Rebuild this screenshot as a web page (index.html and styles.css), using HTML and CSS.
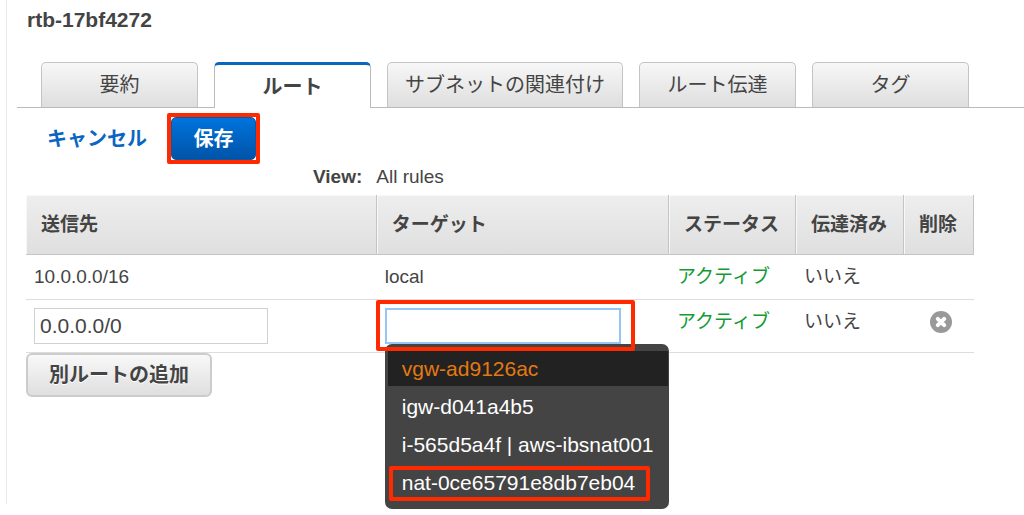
FILE: index.html
```html
<!DOCTYPE html>
<html lang="ja">
<head>
<meta charset="utf-8">
<meta name="viewport" content="width=device-width, initial-scale=1">
<title>rtb-17bf4272</title>
<link rel="stylesheet" href="styles.css">
</head>
<body>
<main class="pane">
  <h1 class="title">rtb-17bf4272</h1>
  <div class="tabs" role="tablist">
    <button class="tab" type="button" role="tab">要約</button>
    <button class="tab tab-active" type="button" role="tab" aria-selected="true">ルート</button>
    <button class="tab" type="button" role="tab">サブネットの関連付け</button>
    <button class="tab" type="button" role="tab">ルート伝達</button>
    <button class="tab" type="button" role="tab">タグ</button>
  </div>
  <div class="content">
    <div class="actions">
      <a class="cancel" href="#">キャンセル</a>
      <div class="save-mark"><button class="save" type="button">保存</button></div>
    </div>
    <div class="view"><strong>View:</strong><span>All rules</span></div>
    <table class="routes">
      <colgroup>
        <col class="col-dest"><col class="col-target"><col class="col-status"><col class="col-prop"><col class="col-del">
      </colgroup>
      <thead>
        <tr><th scope="col">送信先</th><th scope="col">ターゲット</th><th scope="col">ステータス</th><th scope="col">伝達済み</th><th scope="col">削除</th></tr>
      </thead>
      <tbody>
        <tr><td>10.0.0.0/16</td><td>local</td><td class="active">アクティブ</td><td>いいえ</td><td></td></tr>
        <tr class="edit-row">
          <td class="field-cell"><input class="field" type="text" value="0.0.0.0/0" aria-label="送信先"></td>
          <td class="field-cell">
            <div class="combo">
              <input class="field field-focus" type="text" aria-label="ターゲット">
              <ul class="menu">
                <li><button class="option option-current" type="button">vgw-ad9126ac</button></li>
                <li><button class="option" type="button">igw-d041a4b5</button></li>
                <li><button class="option" type="button">i-565d5a4f | aws-ibsnat001</button></li>
                <li><button class="option option-marked" type="button">nat-0ce65791e8db7eb04</button></li>
              </ul>
            </div>
          </td>
          <td class="active">アクティブ</td>
          <td>いいえ</td>
          <td class="delete-cell">
            <button class="delete" type="button" aria-label="削除">
              <svg width="22" height="22" viewBox="0 0 22 22" aria-hidden="true">
                <circle cx="11" cy="11" r="11" fill="#999"/>
                <path d="M7.8 7.8l6.4 6.4M14.2 7.8l-6.4 6.4" stroke="#fff" stroke-width="4" stroke-linecap="round"/>
              </svg>
            </button>
          </td>
        </tr>
      </tbody>
    </table>
    <button class="add" type="button">別ルートの追加</button>
  </div>
</main>
</body>
</html>
```
FILE: styles.css
```css
* {
  box-sizing: border-box;
}

body {
  display: flex;
  flex-direction: column;
  min-height: 100vh;
  margin: 0;
  padding-bottom: 11px;
  background: #fff;
  color: #444;
  font-family: "Liberation Sans", "Noto Sans CJK JP", sans-serif;
  font-size: 19px;
  line-height: 28px;
}

button,
input {
  margin: 0;
  color: inherit;
  font: inherit;
}

button {
  cursor: pointer;
}

.pane {
  flex: 1;
  margin-left: 6px;
  padding-top: 6px;
  border-left: 1px solid #eaeaea;
}

.title {
  margin: 0 0 28px 20px;
  font-size: 21px;
  line-height: 28px;
}

.tabs {
  display: flex;
  gap: 16px;
  margin-left: 10px;
  padding-left: 24px;
  border-bottom: 1px solid #bbb;
}

.tab {
  min-width: 157px;
  height: 45px;
  padding: 0 17px;
  border: 1px solid #c4c4c4;
  border-bottom: 0;
  border-radius: 5px 5px 0 0;
  background: linear-gradient(#f7f7f7, #dedede);
  font-size: 20px;
  white-space: nowrap;
}

.tab-active {
  height: 46px;
  margin-bottom: -1px;
  border-color: #bbb;
  border-top: 3px solid #0a67c1;
  background: #fff;
  font-weight: bold;
}

.content {
  padding: 5px 50px 0 19px;
}

.actions {
  display: flex;
  align-items: center;
  gap: 20px;
  padding-left: 21px;
}

.cancel {
  color: #0a66c2;
  font-size: 20px;
  font-weight: bold;
  text-decoration: none;
}

.save-mark {
  border: 4px solid #ff2a00;
  border-radius: 2px;
}

.save {
  display: block;
  width: 85px;
  height: 43px;
  padding: 0;
  border: 1px solid #0a58a8;
  border-radius: 5px;
  background: linear-gradient(#0073dd, #0054a8);
  color: #fff;
  font-size: 20px;
  font-weight: bold;
}

.view {
  display: flex;
  gap: 14px;
  padding: 0 0 5px 287px;
  line-height: 26px;
}

.routes {
  width: 100%;
  border-collapse: separate;
  border-spacing: 0;
  table-layout: fixed;
}

.col-dest {
  width: 37%;
}

.col-status {
  width: 127px;
}

.col-prop {
  width: 108px;
}

.col-del {
  width: 70px;
}

.routes th {
  height: 60px;
  padding: 0 0 0 15px;
  border-right: 1px solid #c4c4c4;
  border-bottom: 1px solid #c4c4c4;
  background: linear-gradient(#eee, #dfdfdf);
  box-shadow: inset 1px 1px #f8f8f8;
  text-align: left;
  white-space: nowrap;
}

.routes td {
  height: 45px;
  padding: 8px 0 8px 8px;
  border-bottom: 1px solid #ddd;
  vertical-align: top;
  white-space: nowrap;
}

.edit-row td {
  height: 53px;
}

.routes .active {
  color: #129a33;
}

.routes .field-cell {
  padding-bottom: 7px;
}

.field {
  display: block;
  width: 234px;
  height: 36px;
  padding: 0 5px;
  border: 1px solid #d0d0d0;
  background: #fff;
  font-size: 21px;
}

.field-focus {
  width: 236px;
  border: 2px solid #96c6f8;
  outline: none;
}

.combo {
  position: relative;
  width: 236px;
}

.combo::after {
  position: absolute;
  z-index: 2;
  inset: -8px -14px -7px -9px;
  border: 4px solid #ff2a00;
  border-radius: 2px;
  content: "";
  pointer-events: none;
}

.menu {
  position: absolute;
  z-index: 1;
  top: 100%;
  left: 0;
  display: grid;
  gap: 3px;
  width: 284px;
  margin: 0;
  padding: 7px 3px 9px;
  border-radius: 7px;
  background: #444;
  list-style: none;
}

.option {
  position: relative;
  display: block;
  width: 100%;
  height: 35px;
  padding: 0 14px;
  border: 0;
  background: transparent;
  color: #fff;
  font-size: 21px;
  text-align: left;
}

.option-current {
  background: #222;
  color: #e47911;
}

.option-marked::after {
  position: absolute;
  inset: 1px 18px -1px 1px;
  border: 4px solid #ff2a00;
  border-radius: 2px;
  content: "";
}

.routes .delete-cell {
  padding: 11px 0 0 26px;
}

.delete {
  display: block;
  padding: 0;
  border: 0;
  background: transparent;
}

.delete svg {
  display: block;
}

.add {
  display: block;
  height: 44px;
  padding: 0 21px;
  border: 2px solid #ccc;
  border-radius: 6px;
  background: linear-gradient(#f8f8f8, #dfdfdf);
  font-size: 20px;
  font-weight: bold;
  text-shadow: 0 1px #fff;
}
```
